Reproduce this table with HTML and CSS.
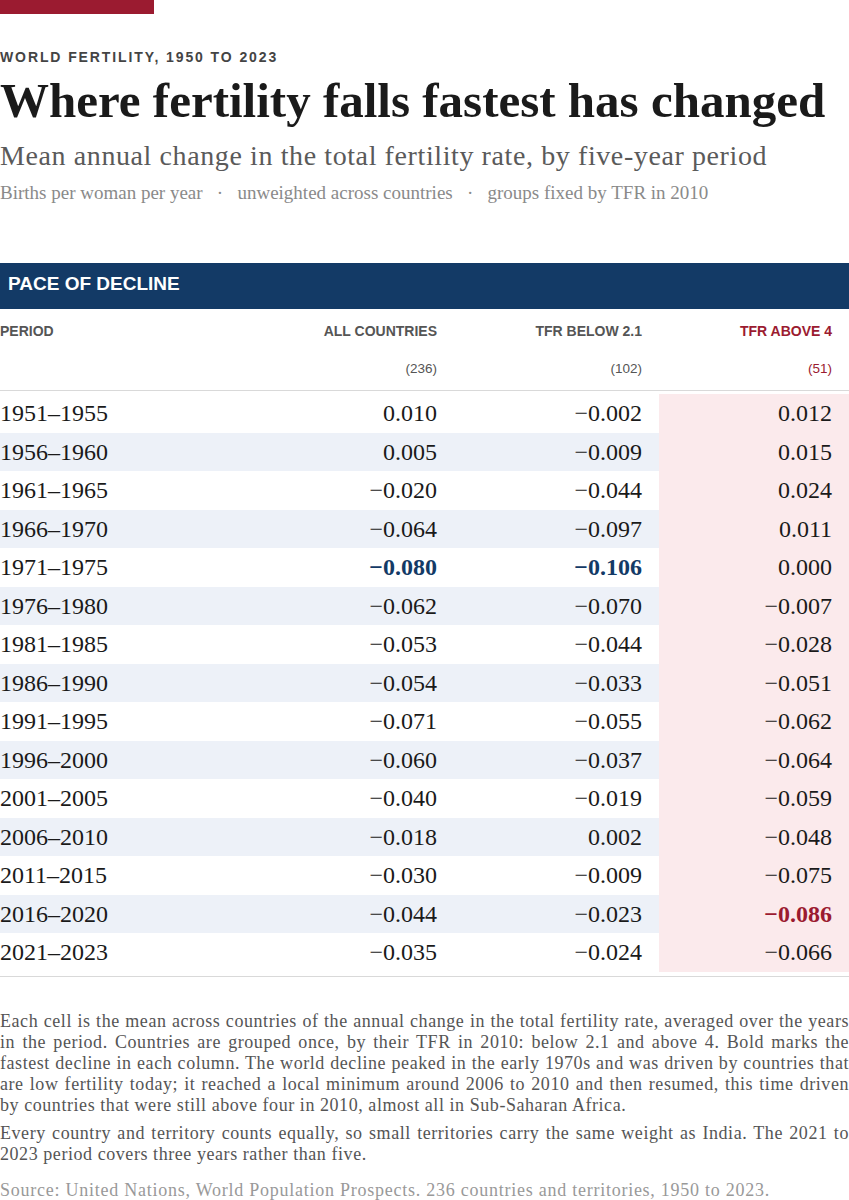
FILE: index.html
```html
<!DOCTYPE html>
<html lang="en">

<head>
    <meta name="viewport" content="width=device-width, initial-scale=1.0">
    <link rel="stylesheet" href="styles.css">
</head>

<body>
    <div class="page">
        <div class="flag"></div>
        <div class="kicker">World fertility, 1950 to 2023</div>
        <h1>Where fertility falls fastest has changed</h1>
        <div class="subtitle">Mean annual change in the total fertility rate, by five-year period</div>
        <div class="meta">Births per woman per year <span class="sep">&middot;</span> unweighted across countries <span class="sep">&middot;</span> groups fixed by TFR in 2010</div>

        <div class="panel-title">Pace of decline</div>

        <div class="data-table">
            <div class="table-head">
                <div class="row head-row">
                    <div class="cell first">Period</div>
                    <div class="cell">All countries</div>
                    <div class="cell">TFR below 2.1</div>
                    <div class="cell high">TFR above 4</div>
                </div>
                <div class="row count-row">
                    <div class="cell first"></div>
                    <div class="cell">(236)</div>
                    <div class="cell">(102)</div>
                    <div class="cell high">(51)</div>
                </div>
            </div>
            <!-- rows are filled in from the data below -->
            <div class="table-body" id="rows"></div>
        </div>

        <div class="notes">
            <p>Each cell is the mean across countries of the annual change in the total fertility rate, averaged over the years in the period. Countries are grouped once, by their TFR in 2010: below 2.1 and above 4. Bold marks the fastest decline in each column. The world decline peaked in the early 1970s and was driven by countries that are low fertility today; it reached a local minimum around 2006 to 2010 and then resumed, this time driven by countries that were still above four in 2010, almost all in Sub-Saharan Africa.</p>
            <p>Every country and territory counts equally, so small territories carry the same weight as India. The 2021 to 2023 period covers three years rather than five.</p>
            <p class="source">Source: United Nations, World Population Prospects. 236 countries and territories, 1950 to 2023.</p>
        </div>
    </div>

    <script>
        const data = [
            ['1951–1955', 0.010, -0.002, 0.012],
            ['1956–1960', 0.005, -0.009, 0.015],
            ['1961–1965', -0.020, -0.044, 0.024],
            ['1966–1970', -0.064, -0.097, 0.011],
            ['1971–1975', -0.080, -0.106, 0.000],
            ['1976–1980', -0.062, -0.070, -0.007],
            ['1981–1985', -0.053, -0.044, -0.028],
            ['1986–1990', -0.054, -0.033, -0.051],
            ['1991–1995', -0.071, -0.055, -0.062],
            ['1996–2000', -0.060, -0.037, -0.064],
            ['2001–2005', -0.040, -0.019, -0.059],
            ['2006–2010', -0.018, 0.002, -0.048],
            ['2011–2015', -0.030, -0.009, -0.075],
            ['2016–2020', -0.044, -0.023, -0.086],
            ['2021–2023', -0.035, -0.024, -0.066]
        ];

        // fastest decline = smallest value in each column
        const mins = [1, 2, 3].map(i => Math.min(...data.map(r => r[i])));

        function fmt(v) {
            const s = Math.abs(v).toFixed(3);
            return v < 0 ? '\u2212' + s : s;
        }

        const rowsEl = document.getElementById('rows');
        data.forEach(r => {
            const row = document.createElement('div');
            row.className = 'row body-row';
            let html = `<div class="cell first">${r[0]}</div>`;
            for (let i = 1; i <= 3; i++) {
                let cls = 'cell';
                if (i === 3) cls += ' high';
                if (r[i] === mins[i - 1]) cls += ' best';
                html += `<div class="${cls}">${fmt(r[i])}</div>`;
            }
            row.innerHTML = html;
            rowsEl.appendChild(row);
        });
    </script>
</body>

</html>
```

FILE: styles.css
```css
body {
    margin: 0;
    background: #fff;
    color: #1a1a1a;
    font-family: "Liberation Serif", serif;
}

.page {
    width: 849px;
}

.flag {
    width: 154px;
    height: 14px;
    background: #9b1b30;
}

.kicker {
    margin-top: 34px;
    font-family: "Liberation Sans", Arial, sans-serif;
    font-weight: bold;
    font-size: 14px;
    line-height: 18px;
    letter-spacing: 1.9px;
    text-transform: uppercase;
    color: #444;
}

h1 {
    margin: 7px 0 0;
    font-size: 49px;
    line-height: 56px;
    font-weight: bold;
    color: #1a1a1a;
}

.subtitle {
    margin-top: 10px;
    font-size: 28px;
    line-height: 34px;
    letter-spacing: 0.6px;
    color: #5a5a5a;
}

.meta {
    margin-top: 8px;
    font-size: 19px;
    line-height: 24px;
    color: #8a8a8a;
}

.meta .sep {
    margin: 0 9.5px;
}

.panel-title {
    margin-top: 58px;
    height: 46px;
    box-sizing: border-box;
    padding: 9px 8px 0;
    background: #133a66;
    color: #fff;
    font-family: "Liberation Sans", Arial, sans-serif;
    font-weight: bold;
    font-size: 19px;
    line-height: 24px;
    text-transform: uppercase;
}

.row {
    display: grid;
    grid-template-columns: 249px 205px 205px 190px;
}

.cell {
    box-sizing: border-box;
    padding-right: 17px;
    text-align: right;
}

.cell.first {
    padding: 0;
    text-align: left;
}

.table-head {
    border-bottom: 1px solid #d9d9d9;
    font-family: "Liberation Sans", Arial, sans-serif;
    color: #555;
}

.head-row {
    padding-top: 14px;
    height: 40px;
    box-sizing: border-box;
    font-size: 14px;
    font-weight: bold;
    line-height: 16px;
    text-transform: uppercase;
}

.count-row {
    padding-top: 12px;
    height: 41px;
    box-sizing: border-box;
    font-size: 13.5px;
    line-height: 16px;
}

.table-head .high {
    color: #9b1b30;
}

.table-body {
    padding: 3px 0 4px;
    border-bottom: 1px solid #d9d9d9;
}

.body-row .cell {
    height: 38.5px;
    line-height: 38.5px;
    font-size: 24px;
}

.body-row:nth-child(even) .cell {
    background: #edf1f8;
}

.body-row .cell.high {
    background: #fbeaec;
}

.cell.best {
    font-weight: bold;
    color: #133a66;
}

.cell.high.best {
    color: #9b1b30;
}

.notes {
    margin-top: 34px;
    font-size: 18px;
    line-height: 21px;
    letter-spacing: 0.56px;
    color: #555;
}

.notes p {
    margin: 0 0 7px;
    text-align: justify;
}

.notes .source {
    margin-top: 15px;
    letter-spacing: 0.75px;
    color: #999;
    text-align: left;
}
```
